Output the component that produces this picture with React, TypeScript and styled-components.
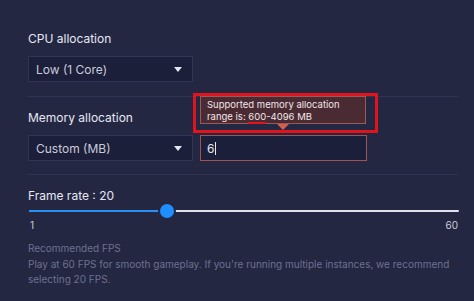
import styled, {createGlobalStyle} from 'styled-components';

const GlobalStyle = createGlobalStyle`
  html, body {
    margin: 0;
    padding: 0;
    background: #242742;
  }
  body {
    font-family: Inter, "Noto Sans", sans-serif;
  }
`;

const Page = styled.div`
  width: 474px;
  height: 301px;
  box-sizing: border-box;
  padding: 31px 16px 0 28px;
  background: #242742;
  color: #e4e6f2;
  overflow: hidden;
`;

const Section = styled.div<{$pad: number}>`
  display: flex;
  flex-direction: column;
  padding-bottom: ${(p) => p.$pad}px;
  border-bottom: 1px solid #2f3354;
  margin-bottom: 13px;
`;

const Label = styled.div<{$gap?: number}>`
  font-size: 12px;
  line-height: 16px;
  color: #e6e8f4;
  margin-bottom: ${(p) => p.$gap ?? 9}px;
`;

const Row = styled.div`
  position: relative;
  display: flex;
  gap: 7px;
`;

const Select = styled.div`
  width: 165px;
  height: 26px;
  box-sizing: border-box;
  display: flex;
  align-items: center;
  justify-content: space-between;
  padding: 0 10px 0 7px;
  background: #1c1f39;
  border: 1px solid #313555;
  font-size: 12px;
  color: #c9cbdc;
`;

const Caret = styled.span`
  width: 0;
  height: 0;
  border-left: 4px solid transparent;
  border-right: 4px solid transparent;
  border-top: 5px solid #e4e6f2;
`;

const Input = styled.div`
  width: 167px;
  height: 26px;
  box-sizing: border-box;
  display: flex;
  align-items: center;
  padding: 0 6px;
  background: #1c1f39;
  border: 1px solid #a2524f;
  font-size: 12px;
  color: #e4e6f2;
`;

const Cursor = styled.span`
  display: inline-block;
  width: 1px;
  height: 13px;
  background: #e4e6f2;
  margin-left: 1px;
`;

const Highlight = styled.div`
  position: absolute;
  left: 165px;
  top: -42px;
  width: 185px;
  height: 40px;
  box-sizing: border-box;
  border: 3px solid #e0141c;
`;

const Tooltip = styled.div`
  position: absolute;
  left: 172px;
  top: -39px;
  width: 166px;
  height: 28px;
  box-sizing: border-box;
  padding: 2px 6px;
  background: #4a2b33;
  border: 1px solid #9b5a58;
  font-size: 9.5px;
  line-height: 12px;
  color: #f0e6e8;
  &::after {
    content: '';
    position: absolute;
    left: 76px;
    bottom: -7px;
    border-left: 6px solid transparent;
    border-right: 6px solid transparent;
    border-top: 6px solid #d4614c;
  }
`;

const Marked = styled.span`
  position: relative;
  &::after {
    content: '';
    position: absolute;
    left: 0;
    right: 0;
    bottom: -2px;
    height: 2px;
    background: #e0141c;
  }
`;

const SliderWrap = styled.div`
  position: relative;
  height: 14px;
  margin-left: 1px;
  width: 430px;
  display: flex;
  align-items: center;
`;

const Track = styled.div`
  flex: 1;
  height: 2px;
  background: #dfe1ee;
  border-radius: 1px;
  position: relative;
`;

const Fill = styled.div`
  position: absolute;
  left: 0;
  top: 0;
  height: 2px;
  background: #2a8ff0;
`;

const Thumb = styled.div`
  position: absolute;
  top: 0;
  width: 14px;
  height: 14px;
  border-radius: 50%;
  background: #1f8fff;
  box-shadow: 0 0 0 2px #242742;
  transform: translateX(-50%);
`;

const Scale = styled.div`
  display: flex;
  justify-content: space-between;
  width: 430px;
  font-size: 10px;
  line-height: 12px;
  color: #c9cbdc;
  margin-top: 1px;
  padding-left: 2px;
  box-sizing: border-box;
`;

const Hint = styled.div`
  margin-top: 10px;
  font-size: 10px;
  line-height: 15px;
  color: #6d7190;
`;

const HintText = styled.div`
  font-size: 10px;
  line-height: 15px;
  color: #6d7190;
  margin-top: 1px;
  width: 430px;
`;

export default function App() {
  const fps = 20;
  const pct = ((fps - 1) / 59) * 100;
  return (
    <Page>
      <GlobalStyle />
      <Section $pad={14}>
        <Label>CPU allocation</Label>
        <Select>
          Low (1 Core)
          <Caret />
        </Select>
      </Section>
      <Section $pad={13}>
        <Label>Memory allocation</Label>
        <Row>
          <Select>
            Custom (MB)
            <Caret />
          </Select>
          <Input>
            6<Cursor />
          </Input>
          <Highlight />
          <Tooltip>
            Supported memory allocation
            <br />
            range is: <Marked>600</Marked>-4096 MB
          </Tooltip>
        </Row>
      </Section>
      <Label $gap={0}>Frame rate : {fps}</Label>
      <SliderWrap>
        <Track>
          <Fill style={{width: `${pct}%`}} />
        </Track>
        <Thumb style={{left: `${pct}%`}} />
      </SliderWrap>
      <Scale>
        <span>1</span>
        <span>60</span>
      </Scale>
      <Hint>Recommended FPS</Hint>
      <HintText>
        Play at 60 FPS for smooth gameplay. If you're running multiple instances, we recommend selecting 20 FPS.
      </HintText>
    </Page>
  );
}
